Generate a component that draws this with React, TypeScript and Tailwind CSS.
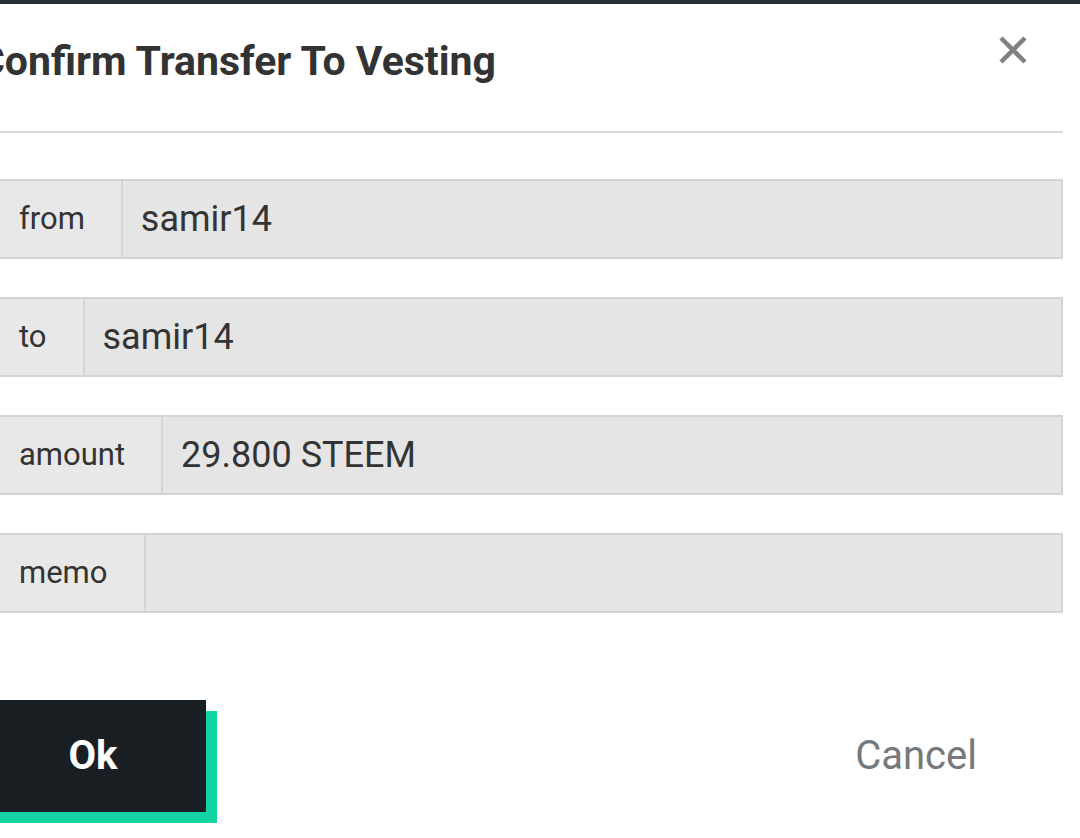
import React from "react";

const rows = [
    { label: "from", value: "samir14" },
    { label: "to", value: "samir14" },
    { label: "amount", value: "29.800 STEEM" },
    { label: "memo", value: "" },
];

export default function App() {
    return (
        <div
            className="w-[1080px] h-[838px] bg-white overflow-hidden text-[#333]"
            style={{ fontFamily: "Roboto, 'Open Sans', sans-serif" }}
        >
            {/* top edge of the page behind the modal */}
            <div className="h-[4px] bg-[#2a3039]" />

            <div className="ml-[-22px] mr-[17px]">
                {/* header */}
                <div className="h-[129px] flex items-start justify-between border-b-2 border-[#d9d9d9]">
                    <h2 className="mt-[33px] text-[41px] leading-[48px] font-bold">
                        Confirm Transfer To Vesting
                    </h2>

                    <button className="mt-[31px] mr-[35px] w-[30px] h-[30px] flex items-center justify-center">
                        <svg width="28" height="28" viewBox="0 0 28 28">
                            <path
                                d="M2 2 L26 26 M26 2 L2 26"
                                stroke="#808080"
                                strokeWidth="4.5"
                                strokeLinecap="butt"
                            />
                        </svg>
                    </button>
                </div>

                {/* fields */}
                <div className="mt-[46px] flex flex-col gap-[38px]">
                    {rows.map((row) => (
                        <div key={row.label} className="flex h-[80px]">
                            <div className="flex items-center pl-[39px] pr-[36px] bg-[#e8e8e8] border-2 border-r-0 border-[#d4d4d4] text-[31px]">
                                {row.label}
                            </div>
                            <div className="flex-1 flex items-center pl-[18px] bg-[#e5e5e5] border-2 border-[#d4d4d4] text-[36px]">
                                {row.value}
                            </div>
                        </div>
                    ))}
                </div>

                {/* actions */}
                <div className="mt-[87px] flex items-center justify-between">
                    <button className="ml-[2px] w-[226px] h-[112px] bg-[#1a1f24] text-white text-[40px] font-bold shadow-[11px_11px_0_#12d4a4]">
                        Ok
                    </button>

                    <button className="mr-[86px] text-[40px] text-[#75797d]">
                        Cancel
                    </button>
                </div>
            </div>
        </div>
    );
}
